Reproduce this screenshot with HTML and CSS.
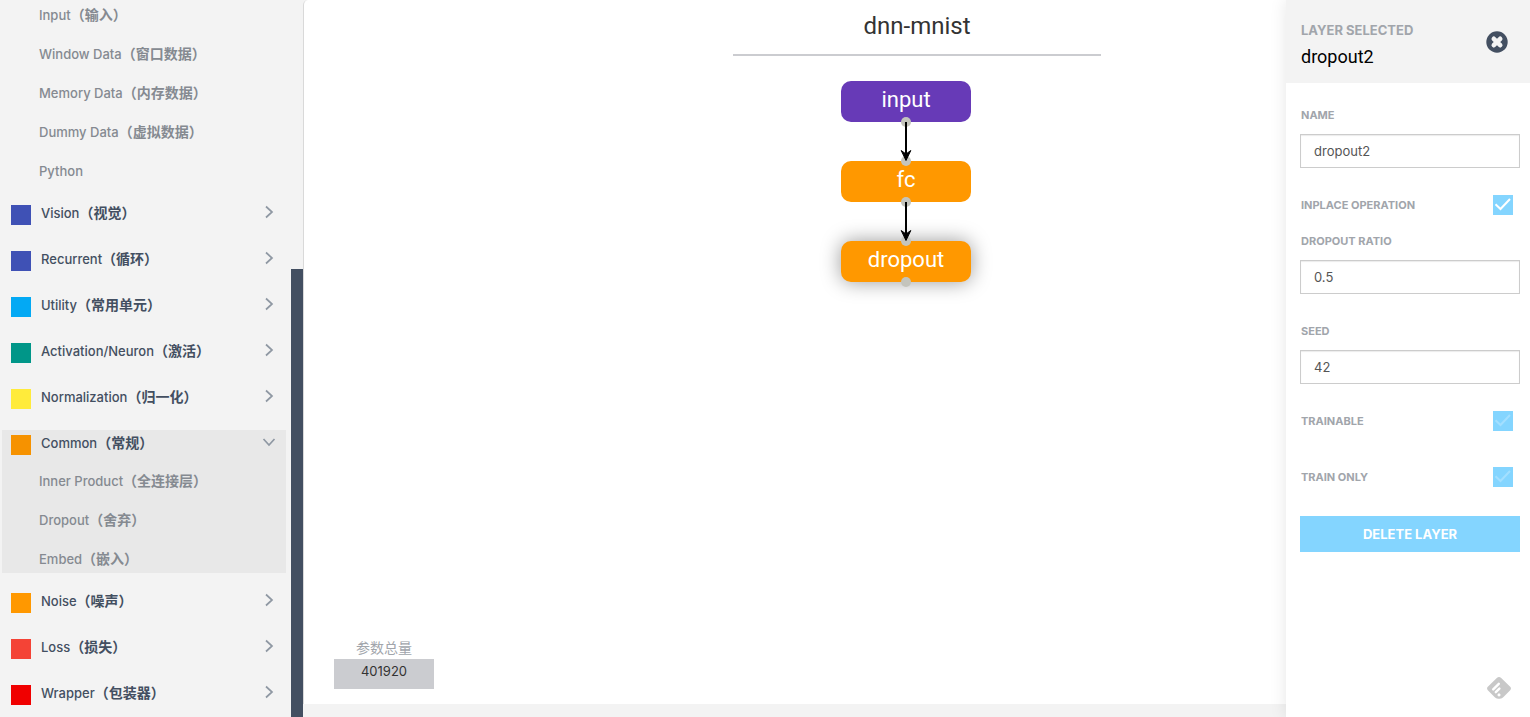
FILE: index.html
```html
<!DOCTYPE html>
<html lang="zh-CN">
<head>
<meta charset="utf-8">
<title>dnn-mnist</title>
<link rel="stylesheet" href="styles.css">
</head>
<body>
<svg class="defs" aria-hidden="true">
  <symbol id="chevron" viewBox="0 0 14 14"><path d="M4 1.500 10 7l-6 5.500" fill="none" stroke="currentColor" stroke-width="1.700"/></symbol>
  <symbol id="tick" viewBox="0 0 20 20"><path d="M2.500 9.200 7.500 14 17 4" fill="none" stroke="#fff" stroke-width="2"/></symbol>
</svg>
<div class="app">
  <aside class="sidebar">
    <nav class="palette">
      <section class="group">
        <ul class="layers first">
          <li><a href="#">Input<span class="zh">（输入）</span></a></li>
          <li><a href="#">Window Data<span class="zh">（窗口数据）</span></a></li>
          <li><a href="#">Memory Data<span class="zh">（内存数据）</span></a></li>
          <li><a href="#">Dummy Data<span class="zh">（虚拟数据）</span></a></li>
          <li><a href="#">Python</a></li>
        </ul>
      </section>
      <section class="group"><button class="head"><span class="swatch vision"></span><span class="name">Vision<span class="zh">（视觉）</span></span><svg class="chevron"><use href="#chevron"/></svg></button></section>
      <section class="group"><button class="head"><span class="swatch recurrent"></span><span class="name">Recurrent<span class="zh">（循环）</span></span><svg class="chevron"><use href="#chevron"/></svg></button></section>
      <section class="group"><button class="head"><span class="swatch utility"></span><span class="name">Utility<span class="zh">（常用单元）</span></span><svg class="chevron"><use href="#chevron"/></svg></button></section>
      <section class="group"><button class="head"><span class="swatch activation"></span><span class="name">Activation/Neuron<span class="zh">（激活）</span></span><svg class="chevron"><use href="#chevron"/></svg></button></section>
      <section class="group"><button class="head"><span class="swatch normalization"></span><span class="name">Normalization<span class="zh">（归一化）</span></span><svg class="chevron"><use href="#chevron"/></svg></button></section>
      <section class="group open">
        <button class="head"><span class="swatch common"></span><span class="name">Common<span class="zh">（常规）</span></span><svg class="chevron"><use href="#chevron"/></svg></button>
        <ul class="layers">
          <li><a href="#">Inner Product<span class="zh">（全连接层）</span></a></li>
          <li><a href="#">Dropout<span class="zh">（舍弃）</span></a></li>
          <li><a href="#">Embed<span class="zh">（嵌入）</span></a></li>
        </ul>
      </section>
      <section class="group"><button class="head"><span class="swatch noise"></span><span class="name">Noise<span class="zh">（噪声）</span></span><svg class="chevron"><use href="#chevron"/></svg></button></section>
      <section class="group"><button class="head"><span class="swatch loss"></span><span class="name">Loss<span class="zh">（损失）</span></span><svg class="chevron"><use href="#chevron"/></svg></button></section>
      <section class="group"><button class="head"><span class="swatch wrapper"></span><span class="name">Wrapper<span class="zh">（包装器）</span></span><svg class="chevron"><use href="#chevron"/></svg></button></section>
    </nav>
    <div class="track"><div class="thumb"></div></div>
  </aside>

  <main class="workspace">
    <div class="sheet">
      <input class="title" type="text" value="dnn-mnist" aria-label="Model name">
      <div class="canvas">
        <div class="node data n-input">input<i class="port out"></i></div>
        <div class="node fc n-fc">fc<i class="port in"></i><i class="port out"></i></div>
        <div class="node drop n-drop">dropout<i class="port in"></i><i class="port out"></i></div>
        <svg class="edge e-first" viewBox="0 0 12 40"><path d="M6 0v34" stroke="#000" stroke-width="2"/><path d="M1.200 28.500 6 38.500l4.800-10L6 32z" stroke="#000"/></svg>
        <svg class="edge e-second" viewBox="0 0 12 40"><path d="M6 0v34" stroke="#000" stroke-width="2"/><path d="M1.200 28.500 6 38.500l4.800-10L6 32z" stroke="#000"/></svg>
      </div>
      <div class="total">
        <span class="total-label">参数总量</span>
        <output class="total-value">401920</output>
      </div>
    </div>
  </main>

  <aside class="panel">
    <header class="panel-head">
      <div class="heading">
        <p class="eyebrow">LAYER SELECTED</p>
        <h2 class="selected">dropout2</h2>
      </div>
      <button class="close" aria-label="Close">
        <svg viewBox="0 0 22 22"><circle cx="11" cy="11" r="10.700" fill="#434f61"/><path d="M7.800 7.800l6.400 6.400M14.200 7.800l-6.400 6.400" stroke="#f3f3f3" stroke-width="4.600" stroke-linecap="round"/></svg>
      </button>
    </header>
    <form class="form">
      <div class="field"><label for="name">NAME</label><input class="text" id="name" type="text" value="dropout2"></div>
      <div class="check"><label for="inplace">INPLACE OPERATION</label><span class="box"><input id="inplace" type="checkbox" checked><svg class="tick"><use href="#tick"/></svg></span></div>
      <div class="field ratio"><label for="ratio">DROPOUT RATIO</label><input class="text" id="ratio" type="text" value="0.5"></div>
      <div class="field"><label for="seed">SEED</label><input class="text" id="seed" type="text" value="42"></div>
      <div class="check"><label for="trainable">TRAINABLE</label><span class="box"><input id="trainable" type="checkbox"><svg class="tick"><use href="#tick"/></svg></span></div>
      <div class="check"><label for="trainonly">TRAIN ONLY</label><span class="box"><input id="trainonly" type="checkbox"><svg class="tick"><use href="#tick"/></svg></span></div>
      <button class="delete" type="button">DELETE LAYER</button>
    </form>
    <a class="feedly" href="#" aria-label="Feedly">
      <svg viewBox="0 0 24 22"><path d="M9.800 1q2.200-2 4.400 0l9 8.800q1.500 1.700 0 3.400L16.500 20q-1.500 1.800-3.500 1.800h-2q-2 0-3.500-1.800L.8 13.200q-1.500-1.700 0-3.400z" fill="#c8c8c8"/><path d="M6.200 12.400l5.600-5.600M8.800 15.200l3.600-3.600" stroke="#fff" stroke-width="2.400" stroke-linecap="round"/><path d="M12 16l1.900 1.900L12 19.800l-1.900-1.900z" fill="#fff"/></svg>
    </a>
  </aside>
</div>
</body>
</html>
```

FILE: styles.css
```css
* { box-sizing: border-box; }

body {
  margin: 0;
  background: #f3f3f3;
  color: #434f61;
  font-family: Inter, "Noto Sans CJK SC", sans-serif;
  font-size: 13px;
}

button, input { font: inherit; color: inherit; }
button { border: 0; padding: 0; background: none; cursor: pointer; }
.defs { position: absolute; width: 0; height: 0; }

.app {
  position: relative;
  display: flex;
  height: 100vh;
  overflow: hidden;
}

/* Layer palette */
.sidebar { display: flex; flex: none; width: 303px; }
.palette { flex: 1; padding: 1px 5px 0 2px; overflow: hidden; }
.group { margin-bottom: 15px; }
.open { background: #e8e8e8; }
.head {
  display: flex;
  align-items: flex-start;
  width: 100%;
  height: 31px;
  padding: 0 10px 0 9px;
  text-align: left;
}
.swatch { flex: none; width: 20px; height: 20px; margin-top: 5px; }
.name { flex: 1; padding-left: 10px; line-height: 26px; font-weight: 500; }
.zh { font-family: "Noto Sans CJK SC", sans-serif; font-size: 14px; font-weight: 600; line-height: 20px; }
.chevron { width: 14px; height: 14px; margin-top: 5px; color: #8f98a3; }
.open .chevron { transform: rotate(90deg); }
.layers {
  display: grid;
  gap: 11px;
  margin: 0;
  padding: 6px 0 0 37px;
  list-style: none;
}
.layers.first { padding-top: 0; }
.layers a {
  display: block;
  height: 28px;
  color: #858a91;
  font-weight: 500;
  line-height: 28px;
  text-decoration: none;
}
.vision, .recurrent { background: #3f51b5; }
.utility { background: #03a9f4; }
.activation { background: #009688; }
.normalization { background: #ffeb3b; }
.common { background: #f69200; }
.noise { background: #ff9800; }
.loss { background: #f44336; }
.wrapper { background: #f00000; }
.track { display: flex; flex: none; width: 12px; padding-top: 269px; }
.thumb { flex: 1; background: #434f61; }

/* Canvas */
.workspace { display: flex; flex: 1; min-width: 0; padding-bottom: 13px; }
.sheet {
  display: flex;
  flex: 1;
  flex-direction: column;
  border-left: 1px solid #d9d9d9;
  border-radius: 5px 0 0 0;
  background: #fff;
}
.title {
  align-self: center;
  width: 30%;
  height: 56px;
  padding: 0 0 3px;
  border: 0;
  border-bottom: 2px solid #cbccd0;
  background: none;
  color: #333;
  font-family: Roboto, sans-serif;
  font-size: 24px;
  text-align: center;
}
.canvas { position: relative; flex: 1; }
.node {
  position: absolute;
  left: 537px;
  width: 130px;
  height: 41px;
  border-radius: 10px;
  background: #ff9800;
  color: #fff;
  font-family: Roboto, sans-serif;
  font-size: 22px;
  line-height: 38px;
  text-align: center;
}
.data { background: #673ab7; }
.n-input { top: 25px; }
.n-fc { top: 105px; }
.n-drop { top: 185px; box-shadow: 0 0 20px rgba(0, 0, 0, .4); }
.port {
  position: absolute;
  left: 60px;
  width: 10px;
  height: 10px;
  border-radius: 50%;
  background: #c4c4bc;
}
.in { top: -5px; }
.out { bottom: -5px; }
.edge { position: absolute; left: 596px; width: 12px; height: 40px; }
.e-first { top: 66px; }
.e-second { top: 146px; }
.total {
  display: flex;
  flex-direction: column;
  width: 100px;
  margin: 0 0 15px 30px;
  text-align: center;
}
.total-label { color: #a1a5ab; font-size: 14px; line-height: 22px; }
.total-value {
  height: 30px;
  background: #cbccd0;
  color: #333;
  line-height: 24px;
}

/* Layer settings */
.panel {
  position: absolute;
  inset: 0 0 0 auto;
  display: flex;
  flex-direction: column;
  width: 244px;
  background: #fff;
  box-shadow: 0 0 16px rgba(0, 0, 0, .1);
}
.panel-head {
  display: flex;
  align-items: center;
  justify-content: space-between;
  height: 83px;
  padding: 0 22px 0 15px;
  background: #f3f3f3;
}
.heading { padding-top: 4px; }
.eyebrow {
  margin: 0;
  color: #a1a5ab;
  font-size: 13px;
  font-weight: 700;
  line-height: 26px;
}
.selected {
  margin: 0;
  color: #000;
  font-family: Roboto, sans-serif;
  font-size: 18px;
  font-weight: 400;
  line-height: 28px;
}
.close { width: 22px; height: 22px; }
.close svg, .feedly svg { display: block; width: 100%; height: 100%; }
.form { flex: 1; padding: 20px 10px 0 14px; }
.form label {
  color: #a1a5ab;
  font-size: 11px;
  font-weight: 700;
  line-height: 24px;
}
.field { display: grid; padding: 0 0 25px; }
.field label { padding-left: 1px; }
.text {
  width: 100%;
  height: 34px;
  margin-top: 7px;
  padding: 0 13px;
  border: 1px solid #ccc;
  background: #fff;
  box-shadow: inset 0 1px 1px rgba(0, 0, 0, .08);
  color: #555;
}
.check {
  display: flex;
  align-items: center;
  justify-content: space-between;
  height: 24px;
  margin-bottom: 32px;
  padding: 0 7px 0 1px;
}
.check:has(+ .ratio) { margin-bottom: 12px; }
.box { position: relative; width: 20px; height: 20px; }
.box input {
  display: block;
  width: 20px;
  height: 20px;
  margin: 0;
  appearance: none;
  background: #84d5ff;
}
.tick {
  position: absolute;
  inset: 0;
  width: 20px;
  height: 20px;
  opacity: .25;
  pointer-events: none;
}
.box input:checked + .tick { opacity: 1; }
.delete {
  display: block;
  width: 100%;
  height: 36px;
  margin-top: -5px;
  background: #84d5ff;
  color: #fff;
  font-weight: 700;
}
.feedly { width: 24px; height: 22px; margin: 0 19px 18px auto; }
```
